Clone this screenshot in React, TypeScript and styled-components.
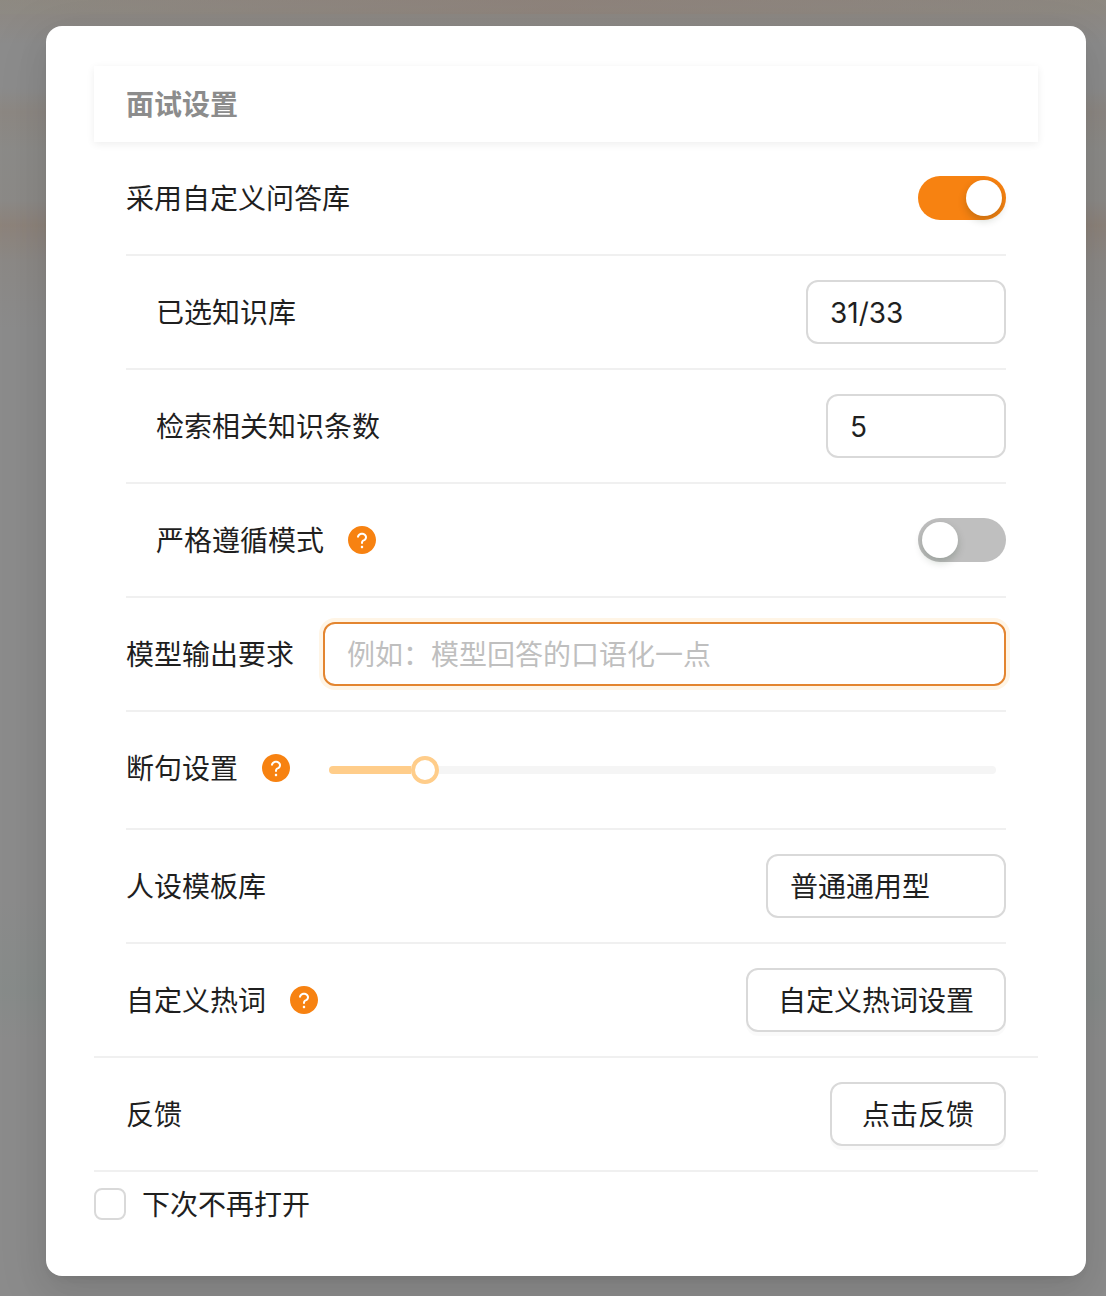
import React, { useState } from "react";
import styled, { createGlobalStyle, css } from "styled-components";
import { AiFillQuestionCircle } from "react-icons/ai";

const GlobalStyle = createGlobalStyle`
  *, *::before, *::after { box-sizing: border-box; }
  body { margin: 0; }
  body, button, input {
    font-family: Inter, "Noto Sans CJK SC", sans-serif;
    font-size: 28px;
    color: #1f1f1f;
  }
`;

const Backdrop = styled.div`
  min-height: 1296px;
  padding: 26px 20px 20px 46px;
  overflow: hidden;
  background:
    linear-gradient(90deg, rgba(142, 140, 132, 0.5), rgba(144, 128, 118, 0.5) 50%, rgba(142, 138, 130, 0.5)) 0 0 / 100% 14px no-repeat,
    linear-gradient(180deg, rgba(142, 132, 122, 0.7) 0, rgba(142, 132, 122, 0.5) 12px, rgba(142, 132, 122, 0) 44px),
    linear-gradient(180deg, transparent 88px, rgba(142, 132, 122, 0.5) 112px, rgba(140, 138, 132, 0.4) 150px,
      rgba(140, 136, 130, 0.45) 200px, rgba(142, 128, 116, 0.7) 225px, rgba(140, 134, 128, 0.45) 262px, transparent 330px),
    linear-gradient(180deg, transparent 900px, rgba(132, 140, 137, 0.5) 990px, transparent 1040px),
    #8c8c8c;
`;

const Modal = styled.section`
  height: 1250px;
  padding: 40px 48px;
  background: #fff;
  border-radius: 16px;
  box-shadow:
    0 12px 32px rgba(0, 0, 0, 0.08),
    0 6px 12px -8px rgba(0, 0, 0, 0.12),
    0 18px 56px 16px rgba(0, 0, 0, 0.05);
`;

const Header = styled.header`
  height: 76px;
  padding: 1px 32px 0;
  line-height: 76px;
  font-weight: 600;
  color: #8c8c8c;
  box-shadow: 0 2px 8px rgba(0, 0, 0, 0.07);
`;

const Group = styled.div`
  padding: 0 32px;
`;

const Row = styled.div<{ $nested?: boolean; $wide?: boolean; $tall?: boolean }>`
  display: flex;
  align-items: flex-start;
  justify-content: space-between;
  height: ${(p) => (p.$tall ? 118 : 114)}px;
  padding: 24px 0;
  padding-left: ${(p) => (p.$nested ? 30 : 0)}px;
  border-bottom: 2px solid #f0f0f0;
  ${(p) =>
    p.$wide &&
    css`
      margin: 0 -32px;
      padding: 24px 32px;
    `}
`;

const Label = styled.div`
  display: flex;
  flex: none;
  align-items: center;
  gap: 22px;
  height: 64px;
  white-space: nowrap;
`;

const LabelText = styled.span`
  padding-bottom: 2px;
`;

const HelpIcon = styled(AiFillQuestionCircle)`
  width: 32px;
  height: 32px;
  color: #f78211;
`;

const Toggle = styled.button<{ $on: boolean }>`
  display: flex;
  justify-content: ${(p) => (p.$on ? "flex-end" : "flex-start")};
  width: 88px;
  height: 44px;
  margin-top: 10px;
  padding: 4px;
  border: 0;
  border-radius: 22px;
  background: ${(p) => (p.$on ? "#f78211" : "#bfbfbf")};
`;

const Knob = styled.span`
  width: 36px;
  height: 36px;
  border-radius: 50%;
  background: #fff;
  box-shadow: 0 4px 8px rgba(0, 35, 11, 0.2);
`;

const fieldBox = css`
  height: 64px;
  border: 2px solid #d9d9d9;
  border-radius: 12px;
  background: #fff;
`;

const Select = styled.div<{ $width: number }>`
  ${fieldBox}
  width: ${(p) => p.$width}px;
  padding: 1px 22px 0;
  line-height: 60px;
`;

const TextField = styled.input`
  ${fieldBox}
  width: 683px;
  padding: 2px 22px 0;
  border-color: #e38530;
  outline: 0;
  box-shadow: 0 0 0 4px #fff5e6;
  &::placeholder { color: #bfbfbf; }
`;

const Button = styled.button`
  ${fieldBox}
  padding: 0 30px 2px;
  box-shadow: 0 4px 0 rgba(0, 0, 0, 0.02);
`;

const Slider = styled.div`
  display: flex;
  align-items: center;
  width: 667px;
  height: 28px;
  margin: 20px 10px;
`;

const Fill = styled.span`
  width: 82px;
  height: 8px;
  border-radius: 4px 0 0 4px;
  background: #ffcd8a;
`;

const Thumb = styled.span`
  width: 28px;
  height: 28px;
  border: 4px solid #ffcd8a;
  border-radius: 50%;
  background: #fff;
`;

const Rail = styled.span`
  flex: 1;
  height: 8px;
  border-radius: 0 4px 4px 0;
  background: #f5f5f5;
`;

const Reminder = styled.label`
  display: flex;
  align-items: center;
  gap: 16px;
  height: 64px;
`;

const CheckBox = styled.input`
  appearance: none;
  width: 32px;
  height: 32px;
  margin: 0;
  border: 2px solid #d9d9d9;
  border-radius: 8px;
  background: #fff;
  &:checked { background: #f78211; border-color: #f78211; }
`;

function Switch({ initial = false }: { initial?: boolean }) {
  const [on, setOn] = useState(initial);
  return (
    <Toggle type="button" role="switch" aria-checked={on} $on={on} onClick={() => setOn(!on)}>
      <Knob />
    </Toggle>
  );
}

function FieldLabel({ text, help }: { text: string; help?: boolean }) {
  return (
    <Label>
      <LabelText>{text}</LabelText>
      {help && <HelpIcon />}
    </Label>
  );
}

export default function App() {
  return (
    <>
      <GlobalStyle />
      <Backdrop>
        <Modal>
          <Header>面试设置</Header>
          <Group>
            <Row>
              <FieldLabel text="采用自定义问答库" />
              <Switch initial />
            </Row>
            <Row $nested>
              <FieldLabel text="已选知识库" />
              <Select $width={200}>31/33</Select>
            </Row>
            <Row $nested>
              <FieldLabel text="检索相关知识条数" />
              <Select $width={180}>5</Select>
            </Row>
            <Row $nested>
              <FieldLabel text="严格遵循模式" help />
              <Switch />
            </Row>
            <Row>
              <FieldLabel text="模型输出要求" />
              <TextField placeholder="例如：模型回答的口语化一点" />
            </Row>
            <Row $tall>
              <FieldLabel text="断句设置" help />
              <Slider>
                <Fill />
                <Thumb />
                <Rail />
              </Slider>
            </Row>
            <Row>
              <FieldLabel text="人设模板库" />
              <Select $width={240}>普通通用型</Select>
            </Row>
            <Row $wide>
              <FieldLabel text="自定义热词" help />
              <Button type="button">自定义热词设置</Button>
            </Row>
            <Row $wide>
              <FieldLabel text="反馈" />
              <Button type="button">点击反馈</Button>
            </Row>
          </Group>
          <Reminder>
            <CheckBox type="checkbox" />
            <LabelText>下次不再打开</LabelText>
          </Reminder>
        </Modal>
      </Backdrop>
    </>
  );
}
